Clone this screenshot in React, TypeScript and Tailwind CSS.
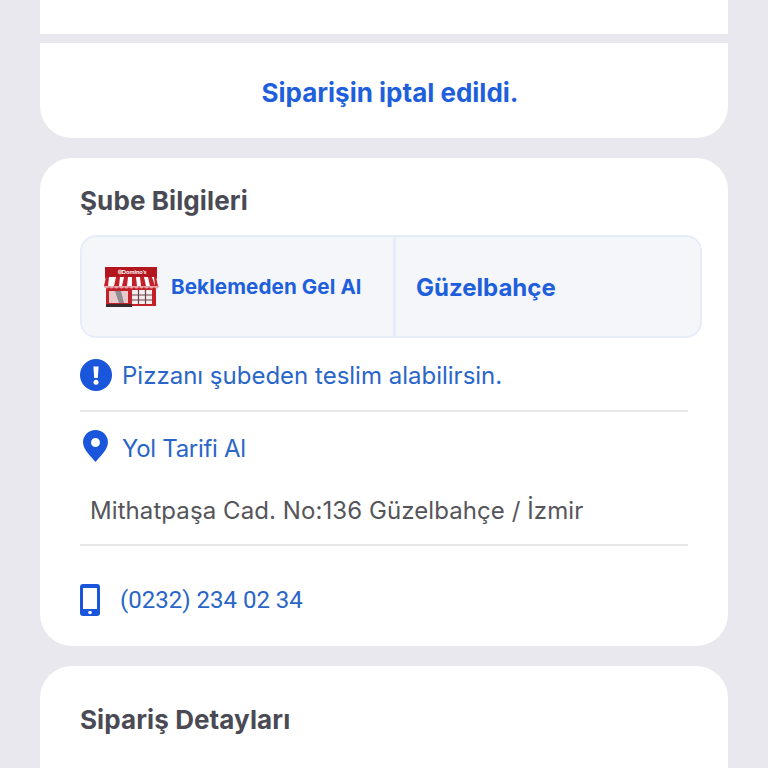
function Store() {
  return (
    <svg width="56" height="40" viewBox="1 0 54 40" className="shrink-0">
      <rect x="2" y="0" width="52" height="12" fill="#b4161f" />
      <rect x="3" y="12" width="50" height="27" fill="#c4202a" />
      <text x="31" y="7" fontSize="6" fontWeight="700" fill="#ffffff" fontFamily="Lato, sans-serif" textAnchor="middle">Domino's</text>
      <circle cx="17" cy="5" r="2.4" fill="#e9a3a8" />
      <path d="M3 10h50l2 9H1z" fill="#ffffff" />
      <path d="M3 10h3l-1 9H1zM13 10h4l-1 9h-5zM21 10h4l-1 9h-5zM29 10h4l1 9h-5zM37 10h4l2 9h-5zM45 10h4l3 9h-5zM51 10h2l2 9h-3z" fill="#c4202a" />
      <path d="M1 19a2.500 2.500 0 0 0 5 0a2.500 2.500 0 0 0 5 0a2.500 2.500 0 0 0 5 0a2.500 2.500 0 0 0 5 0a2.500 2.500 0 0 0 5 0a2.500 2.500 0 0 0 5 0a2.500 2.500 0 0 0 5 0a2.500 2.500 0 0 0 5 0a2.500 2.500 0 0 0 5 0a2.500 2.500 0 0 0 5 0a2.500 2.500 0 0 0 5 0z" fill="#e8a6aa" />
      <rect x="6" y="24" width="19" height="12" fill="#e9c9cb" />
      <path d="M12 24l6 0 3 12h-5z" fill="#8d8d93" />
      <rect x="29" y="23" width="20" height="14" fill="#f4eeee" />
      <path d="M29 28h20M29 33h20M35.500 23v14M42.500 23v14" stroke="#6b4145" strokeWidth="1.200" />
      <rect x="3" y="37" width="26" height="3" fill="#3a2a2c" />
    </svg>
  );
}

function Alert() {
  return (
    <svg width="32" height="32" viewBox="0 0 32 32" className="shrink-0">
      <circle cx="16" cy="16" r="16" fill="#1a56db" />
      <path d="M13.400 7.500h5.200l-.8 11.500h-3.600z" fill="#ffffff" />
      <circle cx="16" cy="23.200" r="2.500" fill="#ffffff" />
    </svg>
  );
}

function Pin() {
  return (
    <svg width="25" height="32" viewBox="0 0 25 32" className="mb-[5px] shrink-0">
      <path fillRule="evenodd" d="M12.500 0C5.600 0 0 5.500 0 12.300C0 20 9 27.500 12.500 32C16 27.500 25 20 25 12.300C25 5.500 19.400 0 12.500 0zM12.500 8a4.500 4.500 0 1 1 0 9a4.500 4.500 0 0 1 0-9z" fill="#1a56db" />
    </svg>
  );
}

function Phone() {
  return (
    <svg width="20" height="32" viewBox="0 0 20 32" className="shrink-0">
      <path fillRule="evenodd" d="M3 0h14a3 3 0 0 1 3 3v26a3 3 0 0 1-3 3H3a3 3 0 0 1-3-3V3a3 3 0 0 1 3-3zM3 4v21h14V4z" fill="#1a56db" />
      <circle cx="10" cy="28.500" r="1.800" fill="#ffffff" />
    </svg>
  );
}

export default function App() {
  return (
    <div className="h-[768px] w-[768px] overflow-hidden bg-[#e8e8ee] px-10 font-['Inter',sans-serif]">
      <div className="h-[34px] bg-white" />
      <div className="mt-[9px] flex h-[95px] items-center justify-center rounded-b-[32px] bg-white pl-[12px] pt-[3px]">
        <span className="text-[26px] font-bold text-[#1f5fdc]">Siparişin iptal edildi.</span>
      </div>

      <div className="mt-5 h-[488px] rounded-[32px] bg-white pl-10 pr-[26px] pt-[27px]">
        <h2 className="h-8 text-[26px] font-bold leading-8 tracking-[0.1px] text-[#4a4a55]">Şube Bilgileri</h2>

        <div className="mt-[18px] flex h-[103px] rounded-[16px] border-2 border-[#e6edf8] bg-[#f4f6fa]">
          <div className="flex w-[314px] items-center gap-[12px] border-r-[3px] border-[#e6edf8] pl-[21px]">
            <Store />
            <span className="pt-[2px] text-[20.600px] font-bold tracking-[0.1px] text-[#1f5fdc]">Beklemeden Gel Al</span>
          </div>
          <div className="flex flex-1 items-center pl-[20px] pt-[2px]">
            <span className="text-[24px] font-bold text-[#1f5fdc]">Güzelbahçe</span>
          </div>
        </div>

        <div className="mr-[14px] flex h-[74px] items-center gap-[10px] border-b-2 border-[#e6e8e8] pt-[2px]">
          <Alert />
          <span className="pt-[2px] text-[24px] text-[#2a66c8]">Pizzanı şubeden teslim alabilirsin.</span>
        </div>

        <div className="mr-[14px] flex h-[72px] items-center gap-[14px] pl-[3px]">
          <Pin />
          <span className="pt-[2px] text-[24px] tracking-[-0.3px] text-[#2a66c8]">Yol Tarifi Al</span>
        </div>

        <div className="mr-[14px] flex h-[62px] items-center border-b-2 border-[#e6e8e8] pb-[6px] pl-[10px]">
          <span className="text-[24px] tracking-[0.08px] text-[#55555a]">Mithatpaşa Cad. No:136 Güzelbahçe / İzmir</span>
        </div>

        <div className="mt-[36px] flex items-center gap-5">
          <Phone />
          <span className="font-['Roboto',sans-serif] text-[24px] text-[#2a66c8]">(0232) 234 02 34</span>
        </div>
      </div>

      <div className="mt-5 h-[200px] rounded-[32px] bg-white pl-10 pt-[38px]">
        <h2 className="h-8 text-[26px] font-bold leading-8 tracking-[0.1px] text-[#4a4a55]">Sipariş Detayları</h2>
      </div>
    </div>
  );
}
